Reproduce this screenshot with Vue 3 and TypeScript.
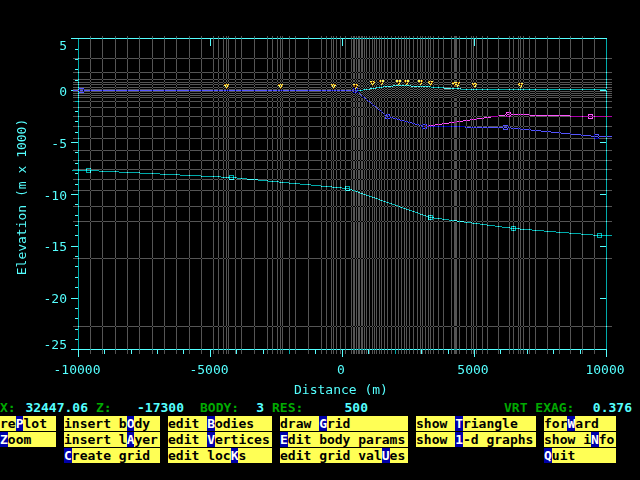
<script setup lang="ts">
type Point = [number, number]

interface Command {
  before: string
  hot: string
  after: string
}

interface Reading {
  name: string
  value: string
}

// Grid node positions on the canvas
const gridX: number[] = [
  90, 102, 115, 127, 139, 152, 164, 176, 189, 201, 213, 218, 223, 226, 228, 235, 241,
  254, 267, 272, 277, 280, 282, 289, 295, 308, 321, 326, 331, 333, 336, 340, 345, 351,
  353, 354, 356, 358, 359, 361, 362, 364, 366, 369, 372, 374, 376, 379, 381, 384, 387,
  391, 395, 398, 401, 404, 406, 409, 413, 417, 420, 422, 425, 428, 430, 433, 438, 443,
  451, 454, 455, 456, 459, 466, 471, 473, 476, 482, 487, 498, 509, 513, 518, 520, 523,
  529, 535, 547, 559, 570, 582, 594,
]
const gridY: number[] = [
  58, 72, 79, 82, 84, 87, 89, 91, 93, 95, 97, 101, 107, 116, 126, 138, 150, 160, 169,
  179, 190, 206, 221, 258, 326,
]

const yLeftMajor: number[] = [142, 194, 246, 298]
const yRightMajor: number[] = [90, 142, 194, 246, 298]
const yMinor: number[] = [
  49, 59, 69, 80, 101, 111, 121, 132, 152, 163, 173, 184, 204, 215, 225, 235, 256, 266,
  277, 287, 308, 318, 329, 339,
]
const xMajor: number[] = [78, 210, 342, 474, 606]
const xMinor: number[] = [104, 131, 157, 183, 236, 263, 289, 315, 368, 395, 421, 448, 500, 527, 553, 580]

const yLabels = [
  { text: '5', y: 50 },
  { text: '0', y: 96 },
  { text: '-5', y: 148 },
  { text: '-10', y: 200 },
  { text: '-15', y: 251 },
  { text: '-20', y: 303 },
  { text: '-25', y: 349 },
]
const xLabels = [
  { text: '-10000', x: 77 },
  { text: '-5000', x: 209 },
  { text: '0', x: 341 },
  { text: '5000', x: 473 },
  { text: '10000', x: 605 },
]

const moho: Point[] = [[72, 170], [88, 170], [231, 177], [347, 188], [430, 217], [513, 228], [599, 235], [611, 235]]
const surface: Point[] = [[358, 90], [366, 89], [372, 88], [378, 87], [386, 86], [398, 85], [424, 86], [450, 88], [472, 89], [606, 89]]
const crust: Point[] = [[73, 90], [355, 90], [387, 116], [424, 126], [464, 126], [465, 127], [505, 127], [596, 136], [611, 136]]
const wedge: Point[] = [[424, 126], [508, 114], [528, 114], [529, 115], [569, 115], [570, 116], [611, 116]]

const mohoNodes: Point[] = [[88, 170], [231, 177], [347, 188], [430, 217], [513, 228], [599, 235]]
const crustNodes: Point[] = [[81, 90], [355, 90], [387, 116], [424, 126], [505, 127], [596, 136]]
const wedgeNodes: Point[] = [[508, 114], [590, 116]]

const stations: Point[] = [
  [226, 84], [280, 84], [333, 84], [355, 84], [372, 81], [381, 80], [398, 80], [406, 80],
  [420, 80], [430, 81], [454, 82], [457, 82], [474, 83], [520, 83],
]
const stationShape: string[] = ['#####', '##.##', '.#.#.', '..##.', '..#..']

// One unit square per plotted cell, stepped along the longer axis
function trace(points: Point[]): string {
  const cells = new Set<string>()
  for (let i = 1; i < points.length; i++) {
    const [x0, y0] = points[i - 1]
    const [x1, y1] = points[i]
    const steps = Math.max(Math.abs(x1 - x0), Math.abs(y1 - y0))
    for (let s = 0; s <= steps; s++) {
      const x = Math.round(x0 + ((x1 - x0) * s) / steps)
      const y = Math.round(y0 + ((y1 - y0) * s) / steps)
      cells.add(`M${x} ${y}h1v1h-1z`)
    }
  }
  return [...cells].join('')
}

function nodeBoxes(points: Point[]): string {
  return points
    .map(([x, y]) => `M${x - 2} ${y - 2}h5v5h-5zM${x - 1} ${y - 1}v3h3v-3z`)
    .join('')
}

function stationCells(overGrid: boolean): string {
  const cells = new Set<string>()
  for (const [cx, top] of stations) {
    stationShape.forEach((row, dy) => {
      for (let dx = 0; dx < row.length; dx++) {
        const x = cx - 2 + dx
        const y = top + dy
        const crossed = gridX.includes(x) !== gridY.includes(y)
        if (row[dx] === '#' && crossed === overGrid) cells.add(`M${x} ${y}h1v1h-1z`)
      }
    })
  }
  return [...cells].join('')
}

const readings: Reading[] = [
  { name: 'X:', value: '32447.06' },
  { name: 'Z:', value: '-17300' },
  { name: 'BODY:', value: '3' },
  { name: 'RES:', value: '500' },
  { name: 'VRT EXAG:', value: '0.376' },
]

const menu: Command[][] = [
  [
    { before: 're', hot: 'P', after: 'lot' },
    { before: '', hot: 'Z', after: 'oom' },
  ],
  [
    { before: 'insert b', hot: 'O', after: 'dy' },
    { before: 'insert l', hot: 'A', after: 'yer' },
    { before: '', hot: 'C', after: 'reate grid' },
  ],
  [
    { before: 'edit ', hot: 'B', after: 'odies' },
    { before: 'edit ', hot: 'V', after: 'ertices' },
    { before: 'edit loc', hot: 'K', after: 's' },
  ],
  [
    { before: 'draw ', hot: 'G', after: 'rid' },
    { before: '', hot: 'E', after: 'dit body params' },
    { before: 'edit grid val', hot: 'U', after: 'es' },
  ],
  [
    { before: 'show ', hot: 'T', after: 'riangle' },
    { before: 'show ', hot: '1', after: '-d graphs' },
  ],
  [
    { before: 'for', hot: 'W', after: 'ard' },
    { before: 'show i', hot: 'N', after: 'fo' },
    { before: '', hot: 'Q', after: 'uit' },
  ],
]
</script>

<template>
  <main class="screen">
    <svg class="plot" viewBox="0 0 640 400" shape-rendering="crispEdges">
      <rect class="backdrop" width="640" height="400" />

      <rect v-for="x in gridX" :key="'gx' + x" class="grid" :x="x" y="36" width="1" height="318" />
      <rect v-for="y in gridY" :key="'gy' + y" class="grid" x="73" :y="y" width="539" height="1" />

      <rect class="axis-dim" x="78" y="39" width="1" height="310" />
      <rect class="axis-dim" x="606" y="39" width="1" height="310" />
      <rect class="axis" x="71" y="38" width="536" height="1" />
      <rect class="axis" x="71" y="349" width="536" height="1" />

      <rect class="axis" x="71" y="90" width="2" height="1" />
      <rect v-for="y in yLeftMajor" :key="'yl' + y" class="axis" x="71" :y="y" width="7" height="1" />
      <rect v-for="y in yRightMajor" :key="'yr' + y" class="axis" x="600" :y="y" width="6" height="1" />
      <rect v-for="y in yMinor" :key="'ym' + y" class="axis" x="75" :y="y" width="3" height="1" />
      <rect v-for="x in xMajor" :key="'xb' + x" class="axis" :x="x" y="350" width="1" height="7" />
      <rect v-for="x in xMajor.slice(1, 4)" :key="'xt' + x" class="axis" :x="x" y="39" width="1" height="7" />
      <rect v-for="x in xMinor" :key="'xm' + x" class="axis" :x="x" y="350" width="1" height="4" />

      <path class="moho" :d="trace(moho)" />
      <path class="moho" :d="nodeBoxes(mohoNodes)" fill-rule="evenodd" />
      <path class="axis" :d="trace(surface)" />
      <path class="wedge" :d="trace(wedge)" />
      <path class="wedge" :d="nodeBoxes(wedgeNodes)" fill-rule="evenodd" />
      <path class="crust" :d="trace(crust)" />
      <path class="crust" :d="nodeBoxes(crustNodes)" fill-rule="evenodd" />
      <path class="station" :d="stationCells(false)" />
      <path class="station-dim" :d="stationCells(true)" />

      <text v-for="l in yLabels" :key="'ty' + l.text" class="label end" x="67" :y="l.y">{{ l.text }}</text>
      <text v-for="l in xLabels" :key="'tx' + l.text" class="label mid" :x="l.x" y="374">{{ l.text }}</text>
      <text class="label mid" x="341" y="394">Distance (m)</text>
      <text class="label mid" transform="translate(26 197) rotate(-90)">Elevation (m x 1000)</text>
    </svg>

    <dl class="status">
      <div v-for="r in readings" :key="r.name" class="reading">
        <dt>{{ r.name }}</dt>
        <dd>{{ r.value }}</dd>
      </div>
    </dl>

    <nav class="menu">
      <div v-for="(column, i) in menu" :key="i" class="column">
        <button v-for="(c, j) in column" :key="j" type="button" class="command">{{ c.before }}<span class="hot">{{ c.hot }}</span>{{ c.after }}</button>
      </div>
    </nav>
  </main>
</template>

<style>
body {
  background: #000000;
}
</style>

<style scoped>
.screen {
  background: #000000;
  font-family: "DejaVu Sans Mono", "Liberation Mono", monospace;
  font-size: 13px;
  line-height: 16px;
}

.plot {
  display: block;
  width: 100%;
  isolation: isolate;
}

.backdrop {
  fill: #000000;
}

.grid {
  fill: #555555;
  mix-blend-mode: difference;
}

.axis {
  fill: #55ffff;
  mix-blend-mode: difference;
}

.axis-dim,
.moho {
  fill: #00aaaa;
  mix-blend-mode: plus-lighter;
}

.crust {
  fill: #5555ff;
  mix-blend-mode: difference;
}

.wedge {
  fill: #ff55ff;
  mix-blend-mode: difference;
}

.station {
  fill: #ffff55;
}

.station-dim {
  fill: #aa5500;
}

.label {
  fill: #55ffff;
  font-size: 13px;
}

.end {
  text-anchor: end;
}

.mid {
  text-anchor: middle;
}

.status {
  display: grid;
  grid-template-columns: 88fr 8fr 88fr 16fr 64fr 8fr 96fr 136fr 128fr 8fr;
  margin: 0;
  font-weight: bold;
  white-space: nowrap;
}

.reading {
  display: flex;
  justify-content: space-between;
  grid-row: 1;
}

.reading:nth-child(1) {
  grid-column: 1;
}

.reading:nth-child(2) {
  grid-column: 3;
}

.reading:nth-child(3) {
  grid-column: 5;
}

.reading:nth-child(4) {
  grid-column: 7;
}

.reading:nth-child(5) {
  grid-column: 9;
}

dt {
  color: #00aa00;
}

dd {
  margin: 0;
  color: #55ffff;
}

.menu {
  display: grid;
  grid-template-columns: 56fr 96fr 104fr 128fr 120fr 72fr 16fr;
  column-gap: 8px;
}

.column {
  display: grid;
  grid-auto-rows: 15px;
  row-gap: 1px;
  align-content: start;
}

.command {
  display: block;
  min-width: 0;
  margin: 0;
  padding: 0;
  overflow: hidden;
  border: 0;
  background: #ffff55;
  color: #000000;
  font-family: inherit;
  font-size: 13px;
  font-weight: bold;
  line-height: 15px;
  text-align: left;
  white-space: pre;
  cursor: pointer;
}

.hot {
  background: #0000aa;
  color: #ffffff;
}
</style>
